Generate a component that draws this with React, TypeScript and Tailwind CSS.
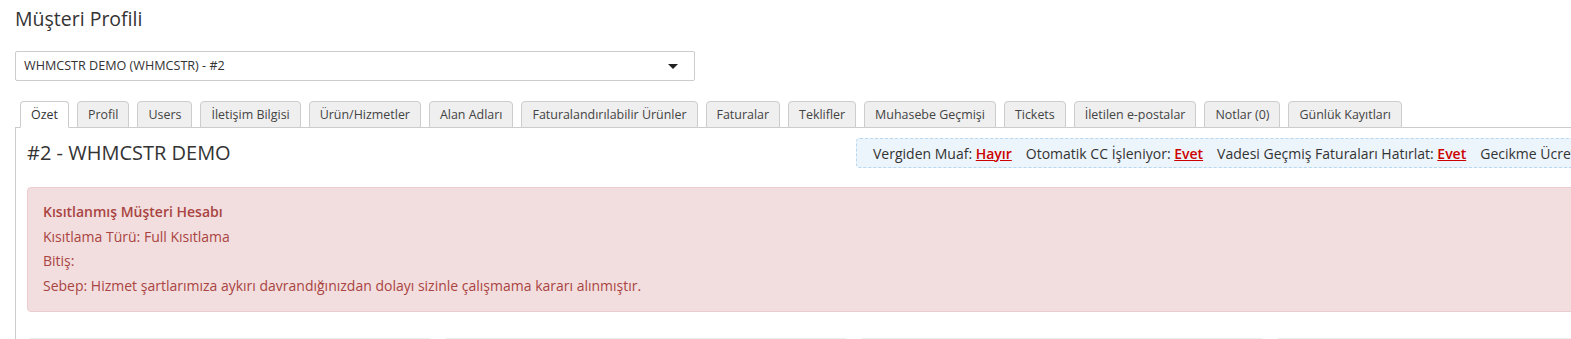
import React from "react";

const tabs = [
  "Özet",
  "Profil",
  "Users",
  "İletişim Bilgisi",
  "Ürün/Hizmetler",
  "Alan Adları",
  "Faturalandırılabilir Ürünler",
  "Faturalar",
  "Teklifler",
  "Muhasebe Geçmişi",
  "Tickets",
  "İletilen e-postalar",
  "Notlar (0)",
  "Günlük Kayıtları",
];

const flags = [
  { label: "Vergiden Muaf:", value: "Hayır" },
  { label: "Otomatik CC İşleniyor:", value: "Evet" },
  { label: "Vadesi Geçmiş Faturaları Hatırlat:", value: "Evet" },
  { label: "Gecikme Ücreti Uygula:", value: "Evet" },
];

export default function App() {
  return (
    <div className="w-[1571px] h-[339px] overflow-hidden bg-white text-[#333] font-['Open_Sans',sans-serif]">
      <h1 className="pl-[15px] pt-[8px] text-[19.5px] leading-[22px] font-normal text-[#333]">
        Müşteri Profili
      </h1>

      <div className="ml-[15px] mt-[21px] w-[680px] h-[30px] border border-[#ccc] rounded-[2px] flex items-center justify-between pl-[8px] pr-[16px] text-[12.6px] text-[#333]">
        <span>WHMCSTR DEMO (WHMCSTR) - #2</span>
        <svg width="10" height="5" viewBox="0 0 10 5">
          <path d="M0 0 L10 0 L5 5 Z" fill="#222" />
        </svg>
      </div>

      <div className="ml-[15px] mt-[20px] pl-[5px] flex gap-[8px] relative z-10">
        {tabs.map((t, i) => (
          <div
            key={t}
            className={
              i === 0
                ? "h-[27px] -mb-px px-[10px] border border-[#ccc] border-b-white rounded-t-[4px] bg-white text-[12.45px] leading-[25px] text-[#333] whitespace-nowrap"
                : "h-[27px] -mb-px px-[10px] border border-[#ccc] rounded-t-[4px] bg-[#efefef] text-[12.45px] leading-[25px] text-[#444] whitespace-nowrap"
            }
          >
            {t}
          </div>
        ))}
      </div>

      <div className="ml-[15px] w-[1750px] border-l border-t border-[#ccc] pl-[11px] pt-[10px]">
        <div className="flex items-center">
          <div className="w-[829px] shrink-0 text-[20px] leading-[26px] text-[#333]">
            #2 - WHMCSTR DEMO
          </div>
          <div className="h-[30px] border border-dashed border-[#b8d7f0] bg-[#edf5fc] rounded-[4px] pl-[16px] pr-[16px] flex items-center gap-[14px] whitespace-nowrap text-[14px] text-[#333]">
            {flags.map((f) => (
              <span key={f.label}>
                {f.label}{" "}
                <span className="font-semibold underline text-[#cc0000]">{f.value}</span>
              </span>
            ))}
          </div>
        </div>

        <div className="mt-[19px] w-[1720px] border border-[#ebccd1] bg-[#f2dede] rounded-[4px] px-[15px] py-[12px] text-[14px] leading-[24.67px] text-[#a94442]">
          <div className="font-semibold">Kısıtlanmış Müşteri Hesabı</div>
          <div>Kısıtlama Türü: Full Kısıtlama</div>
          <div>Bitiş:</div>
          <div>Sebep: Hizmet şartlarımıza aykırı davrandığınızdan dolayı sizinle çalışmama kararı alınmıştır.</div>
        </div>

        <div className="mt-[26px] flex gap-[10px]">
          {[0, 1, 2, 3].map((i) => (
            <div key={i} className="w-[406px] h-[40px] shrink-0 border border-[#eee] rounded-[4px]" />
          ))}
        </div>
      </div>
    </div>
  );
}
